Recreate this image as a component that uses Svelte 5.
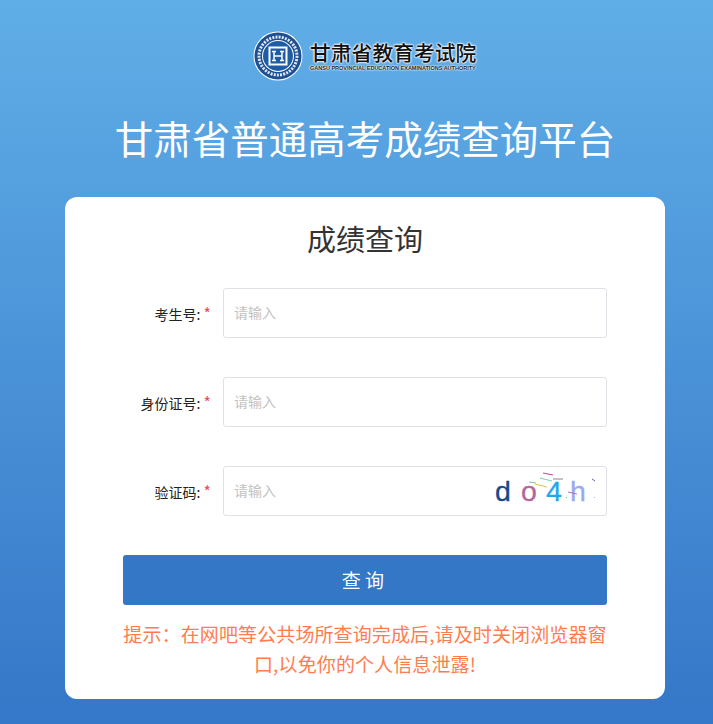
<script>
    let fields = [
        { label: "考生号:" },
        { label: "身份证号:" },
        { label: "验证码:", captcha: true }
    ];

    // captcha noise, in px from the top left of the captcha box
    const noise = [
        [73, 7, 83, 9, "#b5489a"],
        [70, 12, 82, 15, "#6fd6c0"],
        [83, 13, 93, 13, "#888"],
        [59, 16, 66, 17, "#8cc0b0"],
        [65, 18, 77, 21, "#e0c040"],
        [98, 26, 107, 28, "#b070b8"],
        [122, 13, 125, 15, "#6060c8"],
        [96, 31, 97, 32, "#60c0a0"],
        [124, 31, 125, 32, "#a0c0d0"],
        [63, 33, 64, 34, "#c0e0d0"]
    ];
</script>

<main class="page">
    <div class="logo">
        <svg width="50" height="50" viewBox="0 0 50 50">
            <circle cx="25" cy="25" r="24.5" fill="#fff" />
            <circle cx="25" cy="25" r="23.5" fill="#1d4f93" />
            <circle cx="25" cy="25" r="19" fill="none" stroke="#dfe8f3" stroke-width="3" stroke-dasharray="2 1.2" />
            <circle cx="25" cy="25" r="16" fill="#fff" />
            <circle cx="25" cy="25" r="15" fill="#1f5ca6" />
            <path d="M16.5 16.5h17v17h-17z" fill="#1f5ca6" stroke="#fff" stroke-width="2" />
            <path d="M19 20.5h4M27 20.5h4M19 29.5h4M27 29.5h4M21 20v10M29 20v10M21 25h8" fill="none" stroke="#fff" stroke-width="1.5" />
        </svg>
        <div class="logo-text">
            <div class="logo-cn">甘肃省教育考试院</div>
            <div class="logo-en">GANSU PROVINCIAL EDUCATION EXAMINATIONS AUTHORITY</div>
        </div>
    </div>

    <h1>甘肃省普通高考成绩查询平台</h1>

    <section class="card">
        <h2>成绩查询</h2>

        {#each fields as f}
            <div class="row">
                <label>{f.label} <span class="star">*</span></label>
                <div class="input">
                    <span class="placeholder">请输入</span>
                    {#if f.captcha}
                        <div class="captcha">
                            <span class="c1">d</span>
                            <span class="c2">o</span>
                            <span class="c3">4</span>
                            <span class="c4">h</span>
                            <svg class="noise" width="137" height="50" viewBox="0 0 137 50">
                                {#each noise as n}
                                    <line x1={n[0]} y1={n[1]} x2={n[2]} y2={n[3]} stroke={n[4]} stroke-width="1" />
                                {/each}
                            </svg>
                        </div>
                    {/if}
                </div>
            </div>
        {/each}

        <button type="button" class="submit">查 询</button>
        <p class="tip">提示：在网吧等公共场所查询完成后,请及时关闭浏览器窗口,以免你的个人信息泄露!</p>
    </section>
</main>

<style>
    :global(body) {
        margin: 0;
    }

    .page {
        box-sizing: border-box;
        height: 724px;
        padding: 32px 0 0 17px;
        display: flex;
        flex-direction: column;
        align-items: center;
        background: linear-gradient(#60aee7, #3577c8);
        font-family: "Noto Sans CJK SC", "Noto Sans", sans-serif;
        overflow: hidden;
    }

    .logo {
        display: flex;
        align-items: center;
        gap: 7px;
        height: 48px;
        margin-left: -1px;
    }

    .logo-text {
        display: flex;
        flex-direction: column;
        width: 166px;
    }

    .logo-cn {
        font-size: 20.8px;
        line-height: 22px;
        font-weight: 500;
        color: #111;
        white-space: nowrap;
        text-shadow: 0 0 1px #fff, 0 0 2px #fff, 0 0 2px #fff, 0 0 3px #fff;
    }

    .logo-en {
        margin-top: 2px;
        font-size: 5.5px;
        line-height: 7px;
        font-weight: 700;
        color: #222;
        white-space: nowrap;
        text-shadow: 0 0 1px #fff, 0 0 2px #fff, 0 0 2px #fff;
        font-family: "Liberation Sans", sans-serif;
    }

    h1 {
        margin: 27px 0 0;
        font-size: 38.5px;
        line-height: 60px;
        font-weight: 400;
        color: #fff;
    }

    .card {
        box-sizing: border-box;
        width: 600px;
        height: 502px;
        margin-top: 30px;
        padding: 19px 58px 0;
        background: #fff;
        border-radius: 12px;
    }

    h2 {
        margin: 0 0 27px;
        text-align: center;
        font-size: 29px;
        line-height: 45px;
        font-weight: 400;
        color: #333;
    }

    .row {
        display: flex;
        align-items: center;
        gap: 12px;
        height: 50px;
        margin-bottom: 39px;
    }

    label {
        width: 88px;
        text-align: right;
        font-size: 14px;
        color: #222;
        white-space: nowrap;
    }

    .star {
        color: #e8496a;
        font-size: 16px;
    }

    .input {
        position: relative;
        box-sizing: border-box;
        width: 384px;
        height: 50px;
        display: flex;
        align-items: center;
        padding: 0 0 2px 10px;
        border: 1px solid #e0e0e6;
        border-radius: 3px;
    }

    .placeholder {
        font-size: 14px;
        color: #c2c2c2;
    }

    .captcha {
        position: absolute;
        right: -1px;
        top: -1px;
        width: 137px;
        height: 50px;
        font-family: "Liberation Sans", sans-serif;
        font-size: 28.5px;
        -webkit-text-stroke: 0.3px;
    }

    .captcha span {
        position: absolute;
        top: 9px;
    }

    .c1 { left: 25px; color: #164a8c; }
    .c2 { left: 51px; color: #b5649c; }
    .c3 { left: 76px; color: #22a6ec; }
    .c4 { left: 100px; color: #9aaaf0; }

    .noise {
        position: absolute;
        left: 0;
        top: 0;
    }

    .submit {
        display: block;
        width: 484px;
        height: 50px;
        padding: 0 4px 2px 0;
        border: 0;
        border-radius: 3px;
        background: #3377c6;
        color: #fff;
        font-family: inherit;
        font-size: 19px;
    }

    .tip {
        margin: 14px 0 0;
        width: 484px;
        text-align: center;
        font-size: 19px;
        letter-spacing: 0.12px;
        line-height: 30px;
        color: #ff7c4f;
    }
</style>
